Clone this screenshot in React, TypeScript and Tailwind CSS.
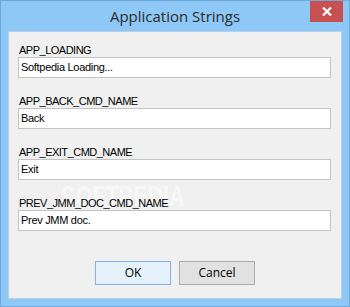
import React from "react";

const fields = [
  { label: "APP_LOADING", value: "Softpedia Loading..." },
  { label: "APP_BACK_CMD_NAME", value: "Back" },
  { label: "APP_EXIT_CMD_NAME", value: "Exit" },
  { label: "PREV_JMM_DOC_CMD_NAME", value: "Prev JMM doc." },
];

export default function App() {
  return (
    <div className="w-[350px] h-[307px] bg-[#8ec8f6] border border-[#6fa8da] flex flex-col relative">
      <div className="h-[30px] relative flex items-center justify-center">
        <span
          className="text-[15px] text-[#2b2b2b] leading-none mt-[1px]"
          style={{ fontFamily: '"Open Sans", "Noto Sans", sans-serif' }}
        >
          Application Strings
        </span>
        <div className="absolute right-[6px] top-0 w-[33px] h-[21px] bg-[#c75050] flex items-center justify-center">
          <svg width="10" height="9" viewBox="0 0 10 9">
            <path d="M1 0.5 L9 8.5 M9 0.5 L1 8.5" stroke="white" strokeWidth="2.2" />
          </svg>
        </div>
      </div>
      <div className="mx-[7px] mb-[7px] flex-1 bg-[#f0f0f0] border border-[#b9d1e8] relative flex flex-col pl-[9px] pr-[10px] pt-[12px]">
        <div
          className="absolute left-[52px] top-[149px] text-[30px] font-bold text-white opacity-50 leading-none pointer-events-none"
          style={{ fontFamily: '"Liberation Sans", sans-serif', transform: "scaleX(0.72)", transformOrigin: "left" }}
        >
          SOFTPEDIA
        </div>
        <div className="flex flex-col gap-[17px] relative">
          {fields.map((f) => (
            <div key={f.label} className="flex flex-col">
              <div
                className="h-[13px] text-[11px] leading-[13px] text-black pl-[1px] tracking-[-0.5px]"
                style={{ fontFamily: '"Liberation Sans", Arial, sans-serif' }}
              >
                {f.label}
              </div>
              <div
                className="h-[21px] w-[313px] bg-white border border-[#c3c3c3] flex items-center pl-[2px] text-[11px] text-black tracking-[-0.3px]"
                style={{ fontFamily: '"Liberation Sans", Arial, sans-serif' }}
              >
                {f.value}
              </div>
            </div>
          ))}
        </div>
        <div className="flex justify-center gap-[8px] mt-[30px] -ml-[9px] -mr-[10px]">
          <div
            className="w-[76px] h-[24px] border border-[#7eb4ea] bg-[#e5f1fb] flex items-center justify-center text-[12px] text-black"
            style={{ fontFamily: '"Open Sans", "Noto Sans", sans-serif' }}
          >
            OK
          </div>
          <div
            className="w-[76px] h-[24px] border border-[#adadad] bg-[#e1e1e1] flex items-center justify-center text-[12px] text-black"
            style={{ fontFamily: '"Open Sans", "Noto Sans", sans-serif' }}
          >
            Cancel
          </div>
        </div>
      </div>
    </div>
  );
}
